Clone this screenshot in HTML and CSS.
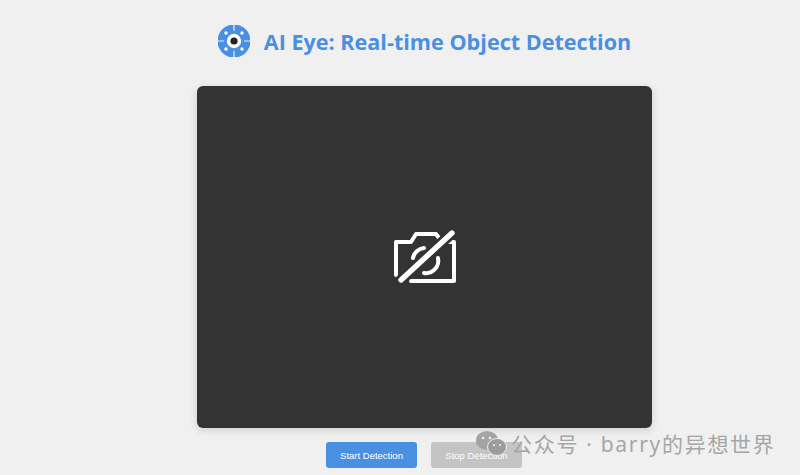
FILE: index.html
```html
<!DOCTYPE html>
<html lang="en">
<head>
  <meta charset="UTF-8">
  <title>AI Eye</title>
  <link rel="stylesheet" href="styles.css">
</head>
<body>
<div class="container">
  <div class="header">
    <svg class="logo" viewBox="0 0 32 32" width="32" height="32">
      <circle cx="16" cy="16" r="16.5" fill="#4a90e2"/>
      <path d="M16 0v6M16 26v6M0 16h6M26 16h6" stroke="#f0f0f0" stroke-width="1.2"/>
      <circle cx="16" cy="16" r="7.2" fill="#fff"/>
      <circle cx="16" cy="16" r="3.6" fill="#222"/>
      <circle cx="8" cy="8" r="1.7" fill="#fff"/>
      <circle cx="24" cy="8" r="1.7" fill="#fff"/>
      <circle cx="8" cy="24" r="1.7" fill="#fff"/>
      <circle cx="24" cy="24" r="1.7" fill="#fff"/>
    </svg>
    <h1>AI Eye: Real-time Object Detection</h1>
  </div>
  <div class="video">
    <svg viewBox="0 0 64 56" width="64" height="56" fill="none" stroke="#fff" stroke-width="4" stroke-linejoin="round" stroke-linecap="round">
      <path d="M3 46V13H18L23 5H43L46 9"/>
      <path d="M54 13H61V52H18"/>
      <path d="M20 29A12.500 12.500 0 0 1 31 19"/>
      <path d="M45 29A12.500 12.500 0 0 1 31 44"/>
      <path d="M8 51 59 4" stroke="#333" stroke-width="11"/>
      <path d="M8 51 59 4" stroke-width="5.400"/>
    </svg>
  </div>
  <div class="buttons">
    <button class="btn start">Start Detection</button>
    <button class="btn stop">Stop Detection</button>
  </div>
</div>
<div class="watermark">
  <svg viewBox="0 0 31 26" width="31" height="26">
    <ellipse cx="11" cy="9.500" rx="11" ry="9.500" fill="#a4a4a4"/>
    <ellipse cx="21" cy="16" rx="9.500" ry="8.500" fill="#9c9c9c" stroke="#efefef" stroke-width="1"/>
    <circle cx="7" cy="7" r="1.300" fill="#efefef"/>
    <circle cx="14" cy="7" r="1.300" fill="#efefef"/>
    <circle cx="18" cy="14" r="1.100" fill="#efefef"/>
    <circle cx="24" cy="14" r="1.100" fill="#efefef"/>
  </svg>
  <span>公众号 · barry的异想世界</span>
</div>
</body>
</html>
```
FILE: styles.css
```css
*{
    margin: 0;
    padding: 0;
    box-sizing: border-box;
}
html, body{
    height: 100%;
    overflow: hidden;
}
body{
    background: #f0f0f0;
    font-family: "Liberation Sans", Arial, sans-serif;
}
.container{
    display: flex;
    flex-direction: column;
    align-items: center;
    padding-top: 25px;
    padding-left: 49px;
}
.header{
    display: flex;
    align-items: center;
    gap: 14px;
    height: 32px;
    margin-bottom: 29px;
}
.header h1{
    font-family: "Open Sans", sans-serif;
    font-size: 21.6px;
    font-weight: 700;
    line-height: 36px;
    padding-top: 2px;
    color: #4a90e2;
    white-space: nowrap;
}
.video{
    width: 455px;
    height: 342px;
    background: #333;
    border-radius: 6px;
    box-shadow: 0 2px 8px rgba(0,0,0,0.15);
    display: flex;
    align-items: center;
    justify-content: center;
}
.buttons{
    display: flex;
    gap: 14px;
    margin-top: 14px;
    padding-right: 1px;
}
.btn{
    width: 91px;
    height: 26px;
    border: none;
    border-radius: 3px;
    color: #fff;
    font-family: "Liberation Sans", Arial, sans-serif;
    font-size: 9.5px;
}
.start{
    background: #4a90e2;
}
.stop{
    background: #c4c4c4;
}
.watermark{
    position: absolute;
    left: 476px;
    top: 431px;
    display: flex;
    align-items: center;
    gap: 4px;
    color: #a6a6a6;
    font-family: "Noto Sans", "Noto Sans CJK SC", sans-serif;
    font-size: 21px;
    line-height: 24px;
    letter-spacing: 1.7px;
    white-space: nowrap;
}
```
